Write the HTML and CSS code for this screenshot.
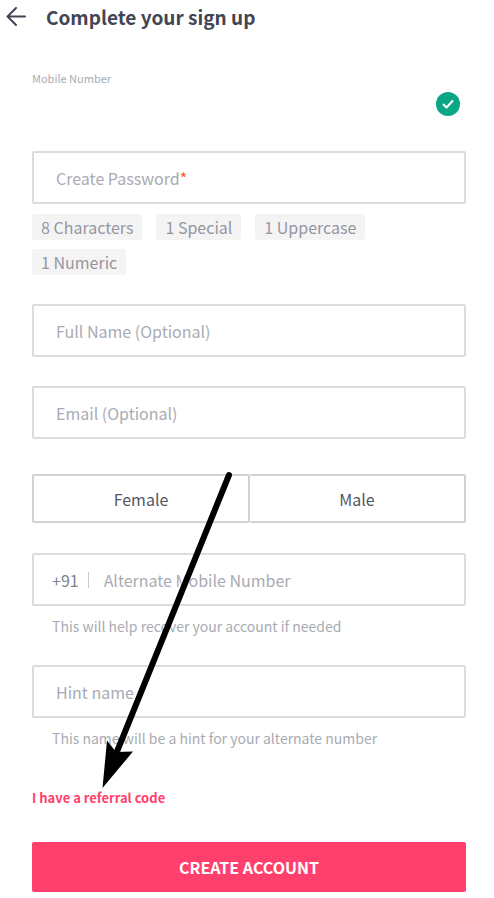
FILE: index.html
```html
<!DOCTYPE html>
<html lang="en">
<head>
    <meta charset="UTF-8">
    <meta name="viewport" content="width=device-width, initial-scale=1.0">
    <title>Complete your sign up</title>
    <link rel="stylesheet" href="styles.css">
</head>
<body>
    <header class="header">
        <button type="button" class="back" aria-label="Back">
            <svg width="20" height="20" viewBox="0 0 20 20" fill="none" stroke="currentColor" stroke-width="2" stroke-linecap="round" stroke-linejoin="round">
                <path d="M19 9.500H1.500M10 1L1.500 9.500l8.500 8.500"/>
            </svg>
        </button>
        <h1>Complete your sign up</h1>
    </header>

    <form class="signup">
        <div class="mobile">
            <label for="mobile">Mobile Number</label>
            <div class="mobile-row">
                <input type="tel" id="mobile" readonly>
                <svg width="24" height="24" viewBox="0 0 24 24">
                    <circle cx="12" cy="12" r="12" fill="#0ba684"/>
                    <path d="M7.500 12.500l3 3 6-6.500" fill="none" stroke="#fff" stroke-width="2" stroke-linecap="round" stroke-linejoin="round"/>
                </svg>
            </div>
        </div>

        <div class="field">
            <label for="password">Create Password<span class="required">*</span></label>
            <input type="password" id="password" required>
        </div>
        <ul class="rules">
            <li>8 Characters</li>
            <li>1 Special</li>
            <li>1 Uppercase</li>
            <li>1 Numeric</li>
        </ul>

        <div class="field">
            <input type="text" id="fullName" placeholder="Full Name (Optional)" aria-label="Full Name (Optional)">
        </div>

        <div class="field">
            <input type="email" id="email" placeholder="Email (Optional)" aria-label="Email (Optional)">
        </div>

        <div class="gender" role="radiogroup" aria-label="Gender">
            <label><input type="radio" name="gender" value="female">Female</label>
            <label><input type="radio" name="gender" value="male">Male</label>
        </div>

        <div class="field phone">
            <span class="code">+91</span>
            <span class="divider"></span>
            <input type="tel" id="altMobile" placeholder="Alternate Mobile Number" aria-label="Alternate Mobile Number">
        </div>
        <p class="help">This will help recover your account if needed</p>

        <div class="field">
            <input type="text" id="hintName" placeholder="Hint name" aria-label="Hint name">
        </div>
        <p class="help">This name will be a hint for your alternate number</p>

        <a href="#" class="referral">I have a referral code</a>

        <button type="submit" class="submit">CREATE ACCOUNT</button>
    </form>

    <!-- arrow pointing at the referral link -->
    <svg class="pointer" width="136" height="318" viewBox="0 0 136 318">
        <path d="M129 4L16 283" stroke="#000" stroke-width="6" stroke-linecap="round"/>
        <path d="M2.500 317L7 269.500l9 11.500 17-.500z" fill="#000"/>
    </svg>
</body>
</html>
```

FILE: styles.css
```css
* {
    box-sizing: border-box;
}

body {
    position: relative;
    margin: 0;
    background-color: #fff;
    color: #424553;
    font-family: "Noto Sans CJK SC", "Open Sans", sans-serif;
    font-size: 16px;
    line-height: 24px;
}

input,
button {
    font: inherit;
    color: inherit;
}

.header {
    display: flex;
    align-items: center;
    gap: 20px;
    height: 34px;
    padding: 0 6px;
}

.header h1 {
    margin: 0;
    font-size: 19px;
    font-weight: bold;
}

.back {
    display: flex;
    padding: 0;
    border: none;
    background: none;
    cursor: pointer;
}

.signup {
    padding: 36px 28px 6px 32px;
}

.mobile {
    margin-bottom: 29px;
}

.mobile label {
    display: block;
    font-size: 11px;
    line-height: 16px;
    color: #a9abb3;
}

.mobile-row {
    display: flex;
    align-items: center;
    height: 36px;
    padding-right: 6px;
}

.mobile-row input {
    flex: 1;
    min-width: 0;
    padding: 0;
    border: none;
    outline: none;
}

.field {
    display: flex;
    align-items: center;
    height: 53px;
    padding: 0 22px;
    border: 2px solid #dcdcde;
    border-radius: 2px;
    margin-bottom: 29px;
}

.field label,
.field input::placeholder {
    color: #a9abb3;
    opacity: 1;
}

.field input {
    flex: 1;
    min-width: 0;
    padding: 0;
    border: none;
    outline: none;
    background: none;
}

.required {
    color: #ff5722;
}

.rules {
    display: flex;
    flex-wrap: wrap;
    gap: 9px 14px;
    margin: -19px 0 29px;
    padding: 0;
    list-style: none;
}

.rules li {
    padding: 0 9px;
    border-radius: 2px;
    background-color: #f4f4f5;
    line-height: 26px;
    color: #94969f;
}

.gender {
    display: flex;
    height: 49px;
    margin: 35px 0 30px;
}

.gender label {
    flex: 1;
    display: flex;
    align-items: center;
    justify-content: center;
    border: 2px solid #d2d2d4;
    border-radius: 2px;
    color: #535665;
    cursor: pointer;
}

.gender label + label {
    border-left: none;
}

.gender input {
    appearance: none;
    width: 0;
    margin: 0;
}

.phone {
    padding-left: 18px;
}

.code {
    color: #7e818c;
}

.divider {
    width: 1px;
    height: 16px;
    margin: 0 15px 0 9px;
    background-color: #c9cacf;
}

.help {
    margin: -19px 20px 29px;
    font-size: 14px;
    line-height: 20px;
    color: #a9abb3;
}

.referral {
    display: block;
    margin: 40px 0 34px;
    font-size: 13px;
    font-weight: bold;
    line-height: 20px;
    color: #ff3f6c;
    text-decoration: none;
}

.submit {
    width: 100%;
    height: 50px;
    border: none;
    border-radius: 2px;
    background-color: #ff3f6c;
    font-size: 16px;
    font-weight: bold;
    color: #fff;
    cursor: pointer;
}

.pointer {
    position: absolute;
    top: 471px;
    left: 100px;
    pointer-events: none;
}
```
